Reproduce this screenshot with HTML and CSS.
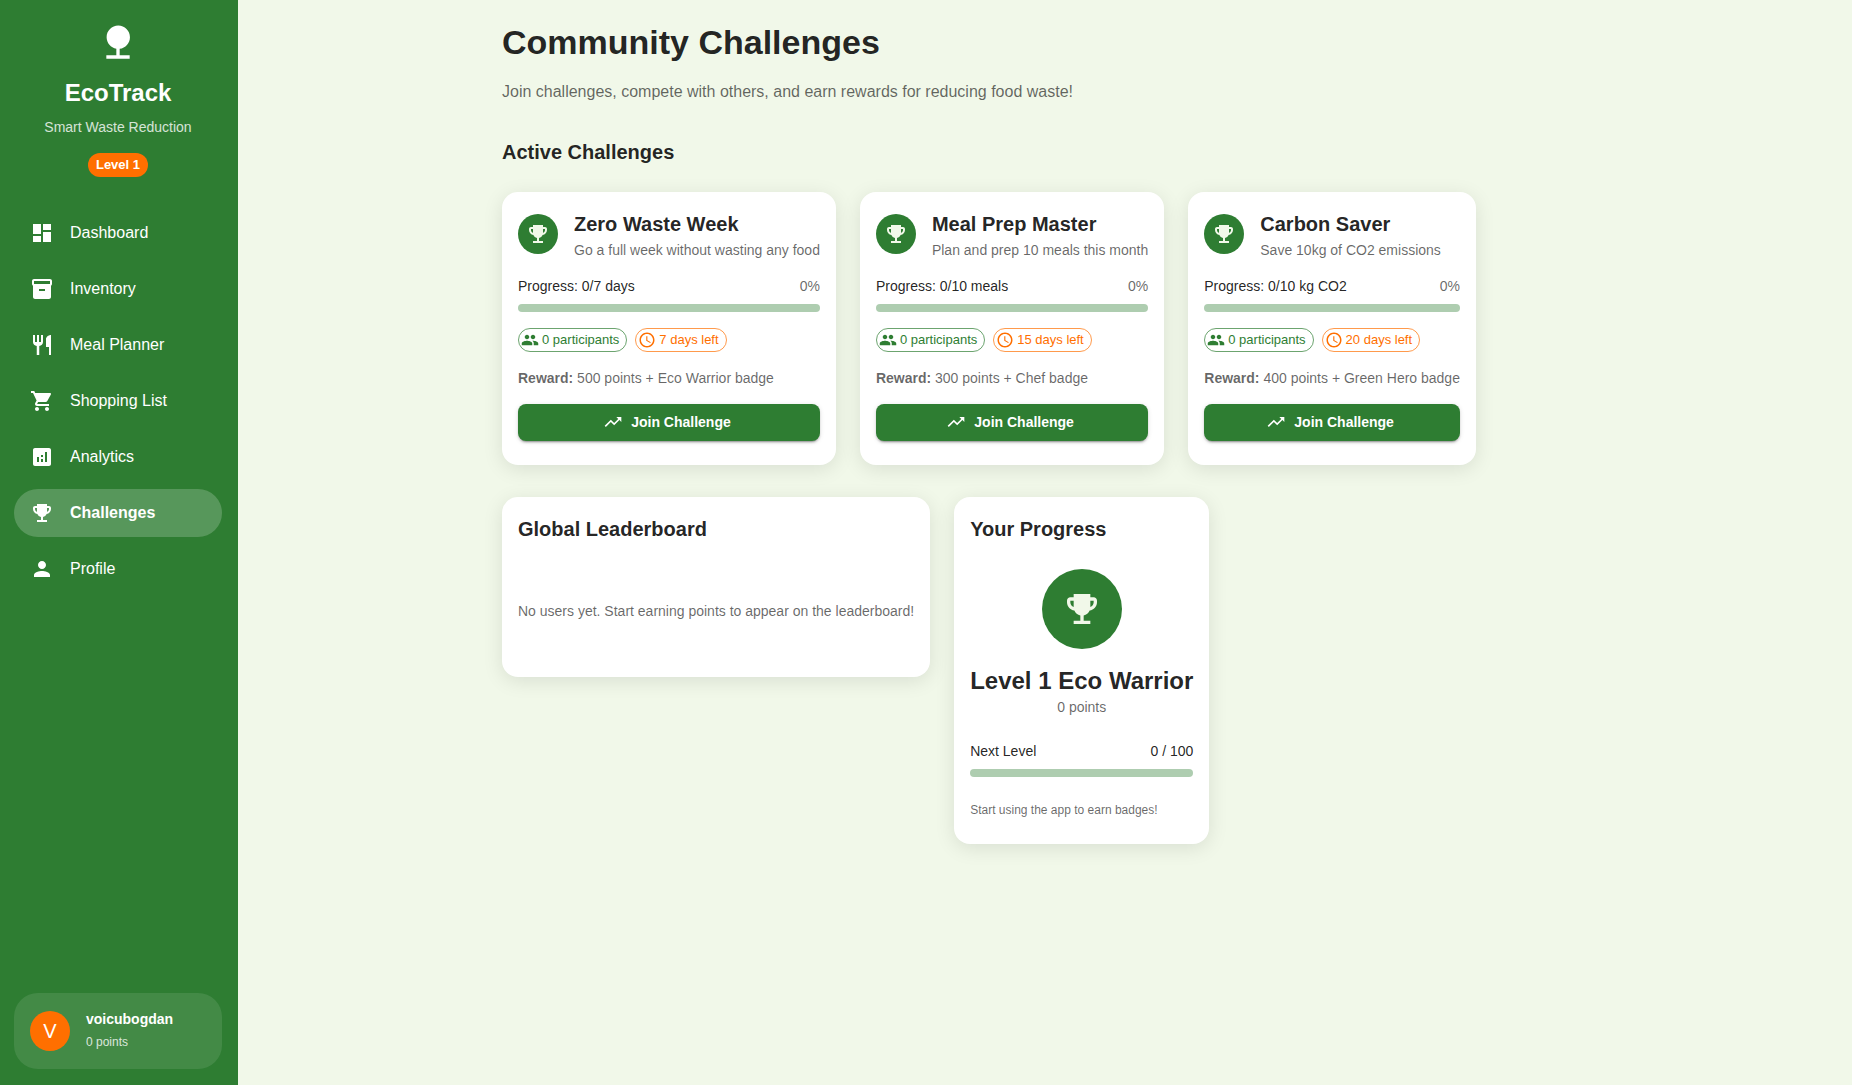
FILE: index.html
```html
<!DOCTYPE html>
<html lang="en">
<head>
  <meta charset="UTF-8" />
  <meta name="viewport" content="width=device-width, initial-scale=1.0"/>
  <title>EcoTrack - Community Challenges</title>
  <link rel="stylesheet" href="styles.css">
</head>
<body>
  <!-- shared icons -->
  <svg class="icon-defs">
    <symbol id="trophy" viewBox="0 0 24 24"><path d="M19 5h-2V3H7v2H5c-1.1 0-2 .9-2 2v1c0 2.55 1.92 4.63 4.39 4.94.63 1.5 1.98 2.63 3.61 2.96V19H7v2h10v-2h-4v-3.1c1.63-.33 2.98-1.46 3.61-2.96C19.08 12.63 21 10.55 21 8V7c0-1.1-.9-2-2-2zM5 8V7h2v3.82C5.84 10.4 5 9.3 5 8zm14 0c0 1.3-.84 2.4-2 2.82V7h2v1z"/></symbol>
    <symbol id="people" viewBox="0 0 24 24"><path d="M16 11c1.66 0 2.99-1.34 2.99-3S17.66 5 16 5c-1.66 0-3 1.34-3 3s1.34 3 3 3zm-8 0c1.66 0 2.99-1.34 2.99-3S9.66 5 8 5C6.34 5 5 6.34 5 8s1.34 3 3 3zm0 2c-2.33 0-7 1.17-7 3.5V19h14v-2.5c0-2.33-4.67-3.5-7-3.5zm8 0c-.29 0-.62.02-.97.05 1.16.84 1.97 1.97 1.97 3.45V19h6v-2.5c0-2.33-4.67-3.5-7-3.5z"/></symbol>
    <symbol id="clock" viewBox="0 0 24 24"><path d="M11.99 2C6.47 2 2 6.48 2 12s4.47 10 9.99 10C17.52 22 22 17.52 22 12S17.52 2 11.99 2zM12 20c-4.42 0-8-3.58-8-8s3.58-8 8-8 8 3.58 8 8-3.58 8-8 8zm.5-13H11v6l5.25 3.15.75-1.23-4.5-2.67z"/></symbol>
    <symbol id="trending" viewBox="0 0 24 24"><path d="m16 6 2.29 2.29-4.88 4.88-4-4L2 16.59 3.41 18l6-6 4 4 6.3-6.29L22 12V6z"/></symbol>
  </svg>

  <div class="app">
    <aside class="sidebar">
      <div class="brand">
        <svg class="brand-icon" viewBox="0 0 24 24"><path d="M13 16.12c3.47-.41 6.17-3.36 6.17-6.95 0-3.87-3.13-7-7-7s-7 3.13-7 7c0 3.47 2.52 6.34 5.83 6.89V20H5v2h14v-2h-6v-3.88z"/></svg>
        <div class="brand-name">EcoTrack</div>
        <div class="brand-tagline">Smart Waste Reduction</div>
        <span class="level-chip">Level 1</span>
      </div>

      <nav class="menu">
        <a class="menu-item">
          <svg class="icon" viewBox="0 0 24 24"><path d="M3 13h8V3H3v10zm0 8h8v-6H3v6zm10 0h8V11h-8v10zm0-18v6h8V3h-8z"/></svg>
          <span>Dashboard</span>
        </a>
        <a class="menu-item">
          <svg class="icon" viewBox="0 0 24 24"><path d="M20 2H4c-1 0-2 .9-2 2v3.01c0 .72.43 1.34 1 1.69V20c0 1.1 1.1 2 2 2h14c.9 0 2-.9 2-2V8.7c.57-.35 1-.97 1-1.69V4c0-1.1-1-2-2-2zm-5 12H9v-2h6v2zm5-7H4V4l16-.02V7z"/></svg>
          <span>Inventory</span>
        </a>
        <a class="menu-item">
          <svg class="icon" viewBox="0 0 24 24"><path d="M16 6v8h3v8h2V2c-2.76 0-5 2.24-5 4zm-5 3H9V2H7v7H5V2H3v7c0 2.12 1.66 3.84 3.75 3.97V22h2.5v-9.03C11.34 12.84 13 11.12 13 9V2h-2v7z"/></svg>
          <span>Meal Planner</span>
        </a>
        <a class="menu-item">
          <svg class="icon" viewBox="0 0 24 24"><path d="M7 18c-1.1 0-1.99.9-1.99 2S5.9 22 7 22s2-.9 2-2-.9-2-2-2zM1 2v2h2l3.6 7.59-1.35 2.45c-.16.28-.25.61-.25.96 0 1.1.9 2 2 2h12v-2H7.42c-.14 0-.25-.11-.25-.25l.03-.12.9-1.63h7.45c.75 0 1.41-.41 1.75-1.03l3.58-6.49c.08-.14.12-.31.12-.48 0-.55-.45-1-1-1H5.21l-.94-2H1zm16 16c-1.1 0-1.99.9-1.99 2s.89 2 1.99 2 2-.9 2-2-.9-2-2-2z"/></svg>
          <span>Shopping List</span>
        </a>
        <a class="menu-item">
          <svg class="icon" viewBox="0 0 24 24"><path d="M19 3H5c-1.1 0-2 .9-2 2v14c0 1.1.9 2 2 2h14c1.1 0 2-.9 2-2V5c0-1.1-.9-2-2-2zM9 17H7v-5h2v5zm4 0h-2v-3h2v3zm0-5h-2v-2h2v2zm4 5h-2V7h2v10z"/></svg>
          <span>Analytics</span>
        </a>
        <a class="menu-item active">
          <svg class="icon"><use href="#trophy"/></svg>
          <span>Challenges</span>
        </a>
        <a class="menu-item">
          <svg class="icon" viewBox="0 0 24 24"><path d="M12 12c2.21 0 4-1.79 4-4s-1.79-4-4-4-4 1.79-4 4 1.79 4 4 4zm0 2c-2.67 0-8 1.34-8 4v2h16v-2c0-2.66-5.33-4-8-4z"/></svg>
          <span>Profile</span>
        </a>
      </nav>

      <div class="user-box">
        <div class="user-avatar">V</div>
        <div>
          <div class="user-name">voicubogdan</div>
          <div class="user-points">0 points</div>
        </div>
      </div>
    </aside>

    <main class="content">
      <h1>Community Challenges</h1>
      <p class="subtitle">Join challenges, compete with others, and earn rewards for reducing food waste!</p>

      <h2 class="section-title">Active Challenges</h2>
      <div class="card-row challenges">
        <div class="card">
          <div class="card-header">
            <div class="avatar"><svg class="icon"><use href="#trophy"/></svg></div>
            <div>
              <h3>Zero Waste Week</h3>
              <p class="muted">Go a full week without wasting any food</p>
            </div>
          </div>
          <div class="progress-label"><span>Progress: 0/7 days</span><span class="muted">0%</span></div>
          <div class="progress-bar"></div>
          <div class="chips">
            <span class="chip green"><svg><use href="#people"/></svg>0 participants</span>
            <span class="chip orange"><svg><use href="#clock"/></svg>7 days left</span>
          </div>
          <p class="reward muted"><strong>Reward:</strong> 500 points + Eco Warrior badge</p>
          <button class="join-btn"><svg><use href="#trending"/></svg>Join Challenge</button>
        </div>

        <div class="card">
          <div class="card-header">
            <div class="avatar"><svg class="icon"><use href="#trophy"/></svg></div>
            <div>
              <h3>Meal Prep Master</h3>
              <p class="muted">Plan and prep 10 meals this month</p>
            </div>
          </div>
          <div class="progress-label"><span>Progress: 0/10 meals</span><span class="muted">0%</span></div>
          <div class="progress-bar"></div>
          <div class="chips">
            <span class="chip green"><svg><use href="#people"/></svg>0 participants</span>
            <span class="chip orange"><svg><use href="#clock"/></svg>15 days left</span>
          </div>
          <p class="reward muted"><strong>Reward:</strong> 300 points + Chef badge</p>
          <button class="join-btn"><svg><use href="#trending"/></svg>Join Challenge</button>
        </div>

        <div class="card">
          <div class="card-header">
            <div class="avatar"><svg class="icon"><use href="#trophy"/></svg></div>
            <div>
              <h3>Carbon Saver</h3>
              <p class="muted">Save 10kg of CO2 emissions</p>
            </div>
          </div>
          <div class="progress-label"><span>Progress: 0/10 kg CO2</span><span class="muted">0%</span></div>
          <div class="progress-bar"></div>
          <div class="chips">
            <span class="chip green"><svg><use href="#people"/></svg>0 participants</span>
            <span class="chip orange"><svg><use href="#clock"/></svg>20 days left</span>
          </div>
          <p class="reward muted"><strong>Reward:</strong> 400 points + Green Hero badge</p>
          <button class="join-btn"><svg><use href="#trending"/></svg>Join Challenge</button>
        </div>
      </div>

      <div class="card-row">
        <div class="card">
          <h3>Global Leaderboard</h3>
          <p class="leaderboard-empty muted">No users yet. Start earning points to appear on the leaderboard!</p>
        </div>

        <div class="card">
          <h3>Your Progress</h3>
          <div class="level-box">
            <div class="avatar large"><svg class="icon"><use href="#trophy"/></svg></div>
            <div class="level-name">Level 1 Eco Warrior</div>
            <p class="muted">0 points</p>
          </div>
          <div class="progress-label"><span>Next Level</span><span>0 / 100</span></div>
          <div class="progress-bar"></div>
          <p class="badge-hint muted">Start using the app to earn badges!</p>
        </div>
      </div>
    </main>
  </div>
</body>
</html>
```
FILE: styles.css
```css
* {
  box-sizing: border-box;
}
body {
  margin: 0;
  font-family: 'Liberation Sans', Arial, sans-serif;
  font-size: 14px;
  line-height: 20px;
  background-color: #f1f8e9;
  color: rgba(0, 0, 0, 0.87);
}
h1, h2, h3, p {
  margin: 0;
}
svg {
  fill: currentColor;
  flex-shrink: 0;
}
.icon-defs {
  display: none;
}
.icon {
  width: 24px;
  height: 24px;
}
.app {
  display: flex;
  min-height: 100vh;
}

/* sidebar */
.sidebar {
  width: 238px;
  flex-shrink: 0;
  display: flex;
  flex-direction: column;
  padding: 22px 16px 16px 14px;
  background-color: #2e7d32;
  color: #fff;
}
.brand {
  display: flex;
  flex-direction: column;
  align-items: center;
  margin-bottom: 32px;
}
.brand-icon {
  width: 40px;
  height: 40px;
}
.brand-name {
  margin-top: 15px;
  font-size: 24px;
  line-height: 32px;
  font-weight: bold;
}
.brand-tagline {
  margin: 8px 0 16px;
  opacity: 0.8;
}
.level-chip {
  height: 24px;
  padding: 0 8px;
  border-radius: 16px;
  background-color: #ff6f00;
  font-size: 13px;
  line-height: 24px;
  font-weight: bold;
}
.menu-item {
  display: flex;
  align-items: center;
  gap: 16px;
  height: 48px;
  padding: 0 16px;
  margin-bottom: 8px;
  border-radius: 24px;
  font-size: 16px;
  cursor: pointer;
}
.menu-item.active {
  background-color: rgba(255, 255, 255, 0.2);
  font-weight: bold;
}
.user-box {
  display: flex;
  align-items: center;
  gap: 16px;
  height: 76px;
  margin-top: auto;
  padding: 16px;
  border-radius: 24px;
  background-color: rgba(255, 255, 255, 0.1);
}
.user-avatar {
  width: 40px;
  height: 40px;
  border-radius: 50%;
  background-color: #ff6f00;
  font-size: 20px;
  line-height: 40px;
  text-align: center;
}
.user-name {
  font-weight: bold;
}
.user-points {
  margin: 3px 0 1px;
  font-size: 12px;
  opacity: 0.8;
}

/* main content */
.content {
  flex: 1;
  padding: 21px 0 24px 264px;
}
h1 {
  margin-bottom: 17px;
  font-size: 34px;
  line-height: 42px;
}
.subtitle {
  margin-bottom: 32px;
  font-size: 16px;
  line-height: 24px;
  color: rgba(0, 0, 0, 0.6);
}
.section-title {
  margin-bottom: 24px;
}
.section-title, h3 {
  font-size: 20px;
  line-height: 32px;
}
.muted {
  color: rgba(0, 0, 0, 0.6);
}
.card-row {
  display: flex;
  align-items: flex-start;
  gap: 24px;
}
.challenges {
  margin-bottom: 32px;
}
.card {
  padding: 16px 16px 24px;
  border-radius: 16px;
  background-color: #fff;
  box-shadow: 0 4px 20px rgba(0, 0, 0, 0.1);
}
.card-header {
  display: flex;
  align-items: center;
  gap: 16px;
  margin-bottom: 16px;
}
.avatar {
  display: flex;
  align-items: center;
  justify-content: center;
  width: 40px;
  height: 40px;
  border-radius: 50%;
  background-color: #2e7d32;
  color: #f1f8e9;
}
.progress-label {
  display: flex;
  justify-content: space-between;
  margin-bottom: 8px;
}
.progress-bar {
  height: 8px;
  border-radius: 4px;
  background-color: #aecdb0;
}
.chips {
  display: flex;
  gap: 8px;
  margin: 16px 0;
}
.chip {
  display: flex;
  align-items: center;
  gap: 3px;
  height: 24px;
  padding: 0 7px 0 2px;
  border: 1px solid;
  border-radius: 16px;
  font-size: 13px;
}
.chip svg {
  width: 18px;
  height: 18px;
}
.chip.green {
  color: #2e7d32;
  border-color: rgba(46, 125, 50, 0.7);
}
.chip.orange {
  color: #ff6f00;
  border-color: rgba(255, 111, 0, 0.7);
}
.reward {
  margin-bottom: 16px;
}
.join-btn {
  display: flex;
  align-items: center;
  justify-content: center;
  gap: 8px;
  width: 100%;
  height: 36.5px;
  padding: 0 20px 0 16px;
  border: none;
  border-radius: 8px;
  background-color: #2e7d32;
  color: #fff;
  font-family: inherit;
  font-size: 14px;
  font-weight: bold;
  cursor: pointer;
  box-shadow: 0 3px 1px -2px rgba(0, 0, 0, 0.2), 0 2px 2px 0 rgba(0, 0, 0, 0.14), 0 1px 5px 0 rgba(0, 0, 0, 0.12);
}
.join-btn svg {
  width: 20px;
  height: 20px;
}

/* leaderboard and level */
.leaderboard-empty {
  padding: 56px 0 32px;
}
.level-box {
  display: flex;
  flex-direction: column;
  align-items: center;
  margin: 24px 0;
}
.avatar.large {
  width: 80px;
  height: 80px;
  margin-bottom: 16px;
}
.avatar.large .icon {
  width: 40px;
  height: 40px;
}
.level-name {
  font-size: 24px;
  line-height: 32px;
  font-weight: bold;
}
.badge-hint {
  margin-top: 23.5px;
  font-size: 12px;
}
```
